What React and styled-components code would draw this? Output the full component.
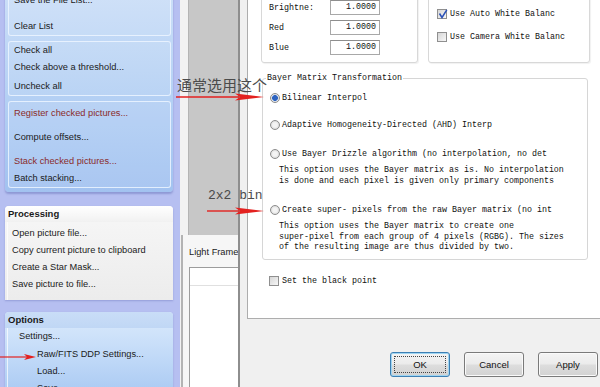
import styled, { createGlobalStyle } from "styled-components";

const GlobalStyle = createGlobalStyle`
  html, body {
    margin: 0;
    padding: 0;
  }
  body {
    width: 600px;
    height: 387px;
    overflow: hidden;
    background: #f0f0f0;
  }
`;

const Screen = styled.div`
  position: relative;
  display: flex;
  width: 600px;
  height: 387px;
  overflow: hidden;
  font-family: "Liberation Sans", Arial, sans-serif;
`;

/* ---------- left task pane ---------- */

const Sidebar = styled.div`
  width: 180px;
  flex: none;
  box-sizing: border-box;
  display: flex;
  flex-direction: column;
  padding: 0 7px 0 5px;
  background: #b6bff1;
`;

const BluePanel = styled.div`
  display: flex;
  flex-direction: column;
  gap: 5px;
  margin-top: -15px;
  padding: 2px 2px 4px 3px;
  border-radius: 0 0 4px 4px;
  background: linear-gradient(180deg, #cde0f8 0%, #b4d0f4 55%, #a2c2f0 100%);
  box-shadow: 0 2px 2px rgba(70, 80, 160, 0.35);
`;

const Group = styled.div`
  display: flex;
  flex-direction: column;
  padding: ${(p) => p.$pad || "0"};
  border: 1px solid rgba(236, 244, 255, 0.85);
  border-radius: 3px;
  background: rgba(255, 255, 255, 0.08);
`;

const Item = styled.div`
  height: 17px;
  line-height: 17px;
  margin-top: ${(p) => p.$gap || 0}px;
  padding-left: ${(p) => (p.$indent ? 29 : p.$pad || 5)}px;
  font-size: 9.25px;
  white-space: nowrap;
  color: ${(p) => (p.$red ? "#8a2c2c" : "#1b1b1b")};
`;

const TaskBox = styled.div`
  display: flex;
  flex-direction: column;
  margin-top: ${(p) => p.$top}px;
  border-radius: 4px 4px 0 0;
  box-shadow: 0 1px 2px rgba(70, 80, 160, 0.3);
  background: ${(p) =>
    p.$blue
      ? "linear-gradient(180deg, #dcebfc 0%, #bdd7f7 60%, #a8c8f2 100%)"
      : "linear-gradient(180deg, #f7f7f7 0%, #ececec 100%)"};
`;

const TaskHeader = styled.div`
  height: 16px;
  line-height: 16px;
  padding-left: 3px;
  font-size: 9.5px;
  font-weight: bold;
  color: #1a1a1a;
  border-radius: 4px 4px 0 0;
  background: ${(p) =>
    p.$blue
      ? "linear-gradient(180deg, #c9ddf7, #c0d7f5)"
      : "linear-gradient(180deg, #ffffff, #f1f1f1)"};
`;

const TaskBody = styled.div`
  display: flex;
  flex-direction: column;
  padding: ${(p) => p.$pad};
  margin: 0 0 0 2px;
  border-left: 1px solid rgba(255, 255, 255, 0.7);
`;

/* ---------- middle strip ---------- */

const Middle = styled.div`
  width: 58px;
  flex: none;
  display: flex;
  flex-direction: column;
  overflow: hidden;
  background: #f2f2f2;
`;

const GreyPane = styled.div`
  height: 235px;
  flex: none;
  margin-left: 8px;
  background: #c7c7c7;
  border-left: 1px solid #b4b4b4;
`;

const FramesPane = styled.div`
  flex: 1;
  display: flex;
  flex-direction: column;
  margin-left: 1px;
  padding: 11px 0 0 6px;
  border-left: 2px solid #b3b3b3;
  background: #f6f6f6;
`;

const FramesTab = styled.div`
  height: 12px;
  line-height: 12px;
  font-size: 9.25px;
  white-space: nowrap;
  color: #1b1b1b;
`;

const ListBox = styled.div`
  flex: 1;
  margin-top: 9px;
  border-left: 1px solid #9c9c9c;
  border-top: 1px solid #9c9c9c;
  background: #fff;
`;

const ListHeader = styled.div`
  height: 17px;
  border-bottom: 1px solid #e0e0e0;
`;

/* ---------- settings dialog ---------- */

const Dialog = styled.div`
  flex: 1;
  display: flex;
  flex-direction: column;
  padding-left: 7px;
  border-left: 2px solid #8e8e8e;
  background: #f0f0f0;
  font-family: "Liberation Mono", "Courier New", monospace;
  font-size: 8.33px;
  color: #111;
`;

const TabPage = styled.div`
  height: 319px;
  flex: none;
  box-sizing: border-box;
  display: flex;
  flex-direction: column;
  padding-left: 13px;
  border-left: 1px solid #adadad;
  border-bottom: 1px solid #adadad;
  background: #fff;
  overflow: hidden;
`;

const TopRow = styled.div`
  display: flex;
  gap: 10px;
  margin-top: -14px;
`;

const GroupBox = styled.div`
  width: ${(p) => p.$w}px;
  height: 77px;
  box-sizing: border-box;
  display: flex;
  flex-direction: column;
  gap: ${(p) => p.$gap}px;
  padding: ${(p) => p.$pad};
  border: 1px solid #d8d8d8;
  border-radius: 3px;
  background: #fff;
  box-shadow: 1px 1px 1px rgba(0, 0, 0, 0.06);
`;

const FieldRow = styled.div`
  display: flex;
  align-items: center;
  height: 15px;
`;

const FieldLabel = styled.span`
  width: 61px;
  white-space: nowrap;
`;

const NumberBox = styled.div`
  width: 50px;
  height: 15px;
  box-sizing: border-box;
  padding-right: 3px;
  line-height: 13px;
  text-align: right;
  border: 1px solid #a8a8a8;
  border-top-color: #8e8e8e;
  background: #fff;
`;

const CheckRow = styled.div`
  display: flex;
  align-items: center;
  gap: 3px;
  height: 10px;
  margin: ${(p) => p.$margin || 0};
  white-space: nowrap;
`;

const Box = styled.span`
  position: relative;
  width: 10px;
  height: 10px;
  flex: none;
  box-sizing: border-box;
  border: 1px solid #8f8f8f;
  background: linear-gradient(135deg, #d6d6d6, #f7f7f7);
`;

const Tick = styled.svg`
  position: absolute;
  left: 0;
  top: -1px;
`;

const Fieldset = styled.fieldset`
  width: 326px;
  box-sizing: border-box;
  min-width: 0;
  margin: 10px 0 0 1px;
  padding: 0 0 6px 0;
  border: 1px solid #d6d6d6;
  border-radius: 3px;
`;

const Legend = styled.legend`
  margin-left: 3px;
  padding: 0 1px;
  line-height: 10px;
  white-space: nowrap;
`;

const Option = styled.div`
  display: flex;
  align-items: center;
  gap: 2px;
  height: 10px;
  margin: ${(p) => p.$top}px 0 0 7px;
  white-space: nowrap;
`;

const Radio = styled.span`
  width: 10px;
  height: 10px;
  flex: none;
  box-sizing: border-box;
  border-radius: 50%;
  border: 1px solid #8c8c8c;
  background: ${(p) =>
    p.$on
      ? "radial-gradient(circle, #2e64c0 0 2.6px, #9fb9e6 3px, #e9e9e9 3.6px)"
      : "radial-gradient(circle, #f4f4f4 0 2px, #d9d9d9 4.5px)"};
`;

const Note = styled.div`
  margin: 6px 0 0 16px;
  line-height: 10.5px;
  white-space: pre;
`;

const ButtonBar = styled.div`
  display: flex;
  justify-content: flex-end;
  gap: 14px;
  padding: 33px 2px 0 0;
`;

const Button = styled.button`
  position: relative;
  width: 60px;
  height: 25px;
  padding: 0;
  font-family: "Liberation Sans", Arial, sans-serif;
  font-size: 9.5px;
  color: #111;
  border: 1px solid ${(p) => (p.$default ? "#3d7fb3" : "#7a7a7a")};
  border-radius: 3px;
  background: linear-gradient(180deg, #f4f4f4 0%, #ebebeb 48%, #dddddd 52%, #d2d2d2 100%);
  box-shadow: ${(p) => (p.$default ? "inset 0 0 0 1px #9fd5f2" : "inset 0 0 0 1px #fafafa")};

  &::after {
    content: "";
    display: ${(p) => (p.$default ? "block" : "none")};
    position: absolute;
    inset: 3px;
    border: 1px dotted #444;
  }
`;

/* ---------- annotations laid over the screenshot ---------- */

const Callout = styled.div`
  position: absolute;
  left: ${(p) => p.$x}px;
  top: ${(p) => p.$y}px;
  line-height: 15px;
  color: #4b4b4b;
  white-space: nowrap;
  font-size: ${(p) => p.$size}px;
  font-family: ${(p) =>
    p.$mono ? '"Liberation Mono", monospace' : '"Noto Sans CJK SC", sans-serif'};
`;

const ArrowSvg = styled.svg`
  position: absolute;
  left: ${(p) => p.$x}px;
  top: ${(p) => p.$y}px;
`;

function Arrow({ x, y, length }) {
  const base = length - 29;
  return (
    <ArrowSvg $x={x} $y={y} width={length + 1} height="11">
      <line x1="0" y1="5" x2={base + 4} y2="5" stroke="#e3211f" strokeWidth="1.4" />
      <polygon
        points={`${base},1.5 ${length},5 ${base},8.5 ${base + 5},5`}
        fill="#e3211f"
      />
    </ArrowSvg>
  );
}

function SmallArrow({ x, y }) {
  return (
    <ArrowSvg $x={x} $y={y} width="38" height="11">
      <line x1="0" y1="5" x2="28" y2="5" stroke="#e3211f" strokeWidth="1.2" />
      <polygon points="24,2 36,5 24,8 27,5" fill="#e3211f" />
    </ArrowSvg>
  );
}

function CheckBox({ checked }) {
  return (
    <Box>
      {checked && (
        <Tick width="10" height="10" viewBox="0 0 10 10">
          <path d="M1.5 4.5 L4 8.5 L8.8 0.8" fill="none" stroke="#2b52b8" strokeWidth="1.5" />
        </Tick>
      )}
    </Box>
  );
}

export default function App() {
  return (
    <>
      <GlobalStyle />
      <Screen>
        <Sidebar>
          <BluePanel>
            <Group $pad="3.5px 0 0">
              <Item>Save the File List...</Item>
              <Item $gap={9}>Clear List</Item>
            </Group>
            <Group>
              <Item>Check all</Item>
              <Item>Check above a threshold...</Item>
              <Item $gap={2}>Uncheck all</Item>
            </Group>
            <Group $pad="3px 0 0">
              <Item $red>Register checked pictures...</Item>
              <Item $gap={7}>Compute offsets...</Item>
              <Item $gap={7} $red>
                Stack checked pictures...
              </Item>
              <Item>Batch stacking...</Item>
            </Group>
          </BluePanel>

          <TaskBox $top={14}>
            <TaskHeader>Processing</TaskHeader>
            <TaskBody $pad="3.5px 0 6.5px">
              <Item $pad={4}>Open picture file...</Item>
              <Item $pad={4}>Copy current picture to clipboard</Item>
              <Item $pad={4}>Create a Star Mask...</Item>
              <Item $pad={4}>Save picture to file...</Item>
            </TaskBody>
          </TaskBox>

          <TaskBox $top={12} $blue>
            <TaskHeader $blue>Options</TaskHeader>
            <TaskBody $pad="0.5px 0 0">
              <Item $pad={11}>Settings...</Item>
              <Item $indent $gap={1}>
                Raw/FITS DDP Settings...
              </Item>
              <Item $indent>Load...</Item>
              <Item $indent>Save...</Item>
            </TaskBody>
          </TaskBox>
        </Sidebar>

        <Middle>
          <GreyPane />
          <FramesPane>
            <FramesTab>Light Frames</FramesTab>
            <ListBox>
              <ListHeader />
            </ListBox>
          </FramesPane>
        </Middle>

        <Dialog>
          <TabPage>
            <TopRow>
              <GroupBox $w={157} $gap={5} $pad="13px 0 0 7px">
                <FieldRow>
                  <FieldLabel>Brightne:</FieldLabel>
                  <NumberBox>1.0000</NumberBox>
                </FieldRow>
                <FieldRow>
                  <FieldLabel>Red</FieldLabel>
                  <NumberBox>1.0000</NumberBox>
                </FieldRow>
                <FieldRow>
                  <FieldLabel>Blue</FieldLabel>
                  <NumberBox>1.0000</NumberBox>
                </FieldRow>
              </GroupBox>
              <GroupBox $w={162} $gap={13} $pad="22px 0 0 8px">
                <CheckRow>
                  <CheckBox checked />
                  Use Auto White Balanc
                </CheckRow>
                <CheckRow>
                  <CheckBox />
                  Use Camera White Balanc
                </CheckRow>
              </GroupBox>
            </TopRow>

            <Fieldset>
              <Legend>Bayer Matrix Transformation</Legend>
              <Option $top={10}>
                <Radio $on />
                Bilinear Interpol
              </Option>
              <Option $top={17}>
                <Radio />
                Adaptive Homogeneity-Directed (AHD) Interp
              </Option>
              <Option $top={19}>
                <Radio />
                Use Bayer Drizzle algorithm (no interpolation, no det
              </Option>
              <Note>
                {"This option uses the Bayer matrix as is. No interpolation\nis done and each pixel is given only primary components"}
              </Note>
              <Option $top={19}>
                <Radio />
                Create super- pixels from the raw Bayer matrix (no int
              </Option>
              <Note>
                {"This option uses the Bayer matrix to create one\nsuper-pixel from each group of 4 pixels (RGBG). The sizes\nof the resulting image are thus divided by two."}
              </Note>
            </Fieldset>

            <CheckRow $margin="16px 0 0 8px">
              <CheckBox />
              Set the black point
            </CheckRow>
          </TabPage>

          <ButtonBar>
            <Button $default>OK</Button>
            <Button>Cancel</Button>
            <Button>Apply</Button>
          </ButtonBar>
        </Dialog>

        <Callout $x={177} $y={77} $size={15}>
          通常选用这个
        </Callout>
        <Arrow x={176} y={92} length={88} />

        <Callout $x={208} $y={188} $size={13} $mono>
          2x2 bin
        </Callout>
        <Arrow x={207} y={206} length={57} />

        <SmallArrow x={0} y={352} />
      </Screen>
    </>
  );
}
